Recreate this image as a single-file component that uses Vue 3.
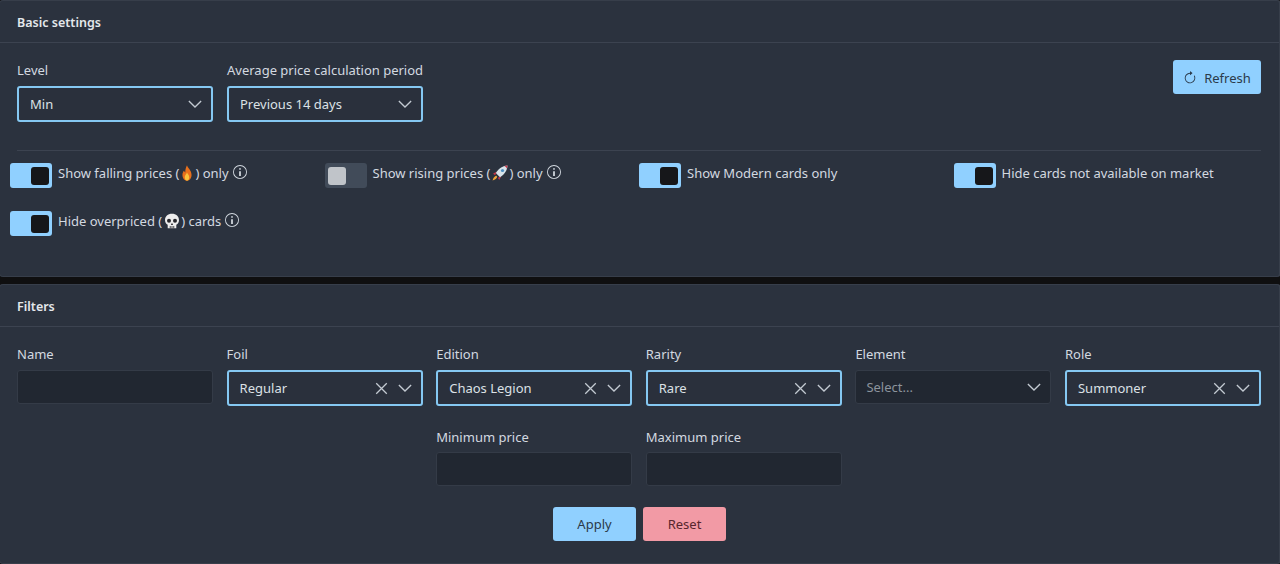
<script setup>
const topSwitches = [
  { label: 'Show falling prices (', emoji: 'fire', tail: ') only', info: true, on: true },
  { label: 'Show rising prices (', emoji: 'rocket', tail: ') only', info: true, on: false },
  { label: 'Show Modern cards only', on: true },
  { label: 'Hide cards not available on market', on: true },
  { label: 'Hide overpriced (', emoji: 'skull', tail: ') cards', info: true, on: true }
]
const filters = [
  { label: 'Name', type: 'input' },
  { label: 'Foil', value: 'Regular' },
  { label: 'Edition', value: 'Chaos Legion' },
  { label: 'Rarity', value: 'Rare' },
  { label: 'Element', placeholder: 'Select...' },
  { label: 'Role', value: 'Summoner' }
]
</script>

<template>
  <div class="page">
    <section class="card first">
      <header class="head">Basic settings</header>
      <div class="body">
        <div class="top-row">
          <div class="field">
            <label>Level</label>
            <div class="select active"><span class="val">Min</span>
              <svg class="chev" viewBox="0 0 16 16"><path d="M1 4.500l7 7 7-7" /></svg>
            </div>
          </div>
          <div class="field">
            <label>Average price calculation period</label>
            <div class="select active"><span class="val">Previous 14 days</span>
              <svg class="chev" viewBox="0 0 16 16"><path d="M1 4.500l7 7 7-7" /></svg>
            </div>
          </div>
          <button class="btn refresh">
            <svg class="refresh-icon" viewBox="0 0 16 16" fill="currentColor">
              <path fill-rule="evenodd" d="M8 3a5 5 0 1 0 4.546 2.914.5.5 0 0 1 .908-.417A6 6 0 1 1 8 2v1z" />
              <path d="M8 4.466V.534a.25.25 0 0 1 .41-.192l2.360 1.966c.12.1.12.284 0 .384L8.410 4.658A.25.25 0 0 1 8 4.466z" />
            </svg>
            Refresh
          </button>
        </div>
        <hr class="rule" />
        <div class="switches">
          <div v-for="s in topSwitches" :key="s.label" class="switch-item">
            <span class="switch" :class="{ on: s.on }"><i></i></span>
            <span class="switch-text">{{ s.label }}<template v-if="s.emoji">
                <svg v-if="s.emoji === 'fire'" class="emoji fire" viewBox="0 0 16 16" preserveAspectRatio="none">
                  <path fill="#e8701c" d="M8 .3c.6 2.600 5.200 4.900 5.200 9.600 0 3.400-2.400 5.800-5.200 5.800s-5.200-2.400-5.200-5.800c0-2 .9-3.500 1.900-4.500.2 1.100.6 1.800 1.300 2.200C6 5 6.600 2.400 8 .3z" />
                  <path fill="#f9c33c" d="M8 7.500c.4 1.500 2.600 2.500 2.600 4.800 0 1.800-1.200 3.400-2.600 3.400s-2.600-1.600-2.600-3.400C5.400 10.300 7.300 9.200 8 7.500z" />
                </svg>
                <svg v-else-if="s.emoji === 'rocket'" class="emoji" viewBox="0 0 16 16">
                  <path fill="#c8384a" d="M4.500 6.800 1 8.800l2.200 1.400zM9.200 11.500 7.200 15l-1.400-2.200z" />
                  <path fill="#d7e3ea" d="M15.500.5C11 .7 7 3 3.800 8l4.200 4.200c5-3.200 7.300-7.200 7.500-11.700z" />
                  <circle cx="10.500" cy="5.500" r="1.600" fill="#4d8fc2" />
                  <path fill="#c8384a" d="M12.200 1.100c1.100.5 2.200 1.500 2.700 2.700l.6-3.300z" />
                  <path fill="#f2a53a" d="M4.300 10.800c-1.600.4-3 2-3.700 4.600 2.600-.7 4.200-2.100 4.600-3.700z" />
                </svg>
                <svg v-else class="emoji" viewBox="0 0 16 16">
                  <path fill="#ededed" d="M8 .7C3.800.7 1 3.300 1 7c0 2.300 1.100 3.900 2.700 4.800v3.500h8.600v-3.500C13.900 10.900 15 9.300 15 7c0-3.700-2.800-6.300-7-6.300z" />
                  <circle cx="5" cy="7.700" r="2" fill="#26262a" />
                  <circle cx="11" cy="7.700" r="2" fill="#26262a" />
                  <path fill="#26262a" d="M8 9.800l1.100 2.100H6.900zM5.800 13h.8v2.300h-.8zM7.600 13h.8v2.300h-.8zM9.400 13h.8v2.300h-.8z" />
                </svg>{{ s.tail }}</template>
              <svg v-if="s.info" class="info" viewBox="0 0 16 16" fill="currentColor">
                <path d="M8 15A7 7 0 1 1 8 1a7 7 0 0 1 0 14zm0 1A8 8 0 1 0 8 0a8 8 0 0 0 0 16z" />
                <path d="M7 7h2v5.500H7zM9 4.500a1 1 0 1 1-2 0 1 1 0 0 1 2 0z" />
              </svg>
            </span>
          </div>
        </div>
      </div>
    </section>

    <section class="card second">
      <header class="head">Filters</header>
      <div class="body filters">
        <div v-for="f in filters" :key="f.label" class="field">
          <label>{{ f.label }}</label>
          <div v-if="f.type === 'input'" class="input"></div>
          <div v-else-if="f.placeholder" class="select idle">
            <span class="val placeholder">{{ f.placeholder }}</span>
            <svg class="chev" viewBox="0 0 16 16"><path d="M1 4.500l7 7 7-7" /></svg>
          </div>
          <div v-else class="select active">
            <span class="val">{{ f.value }}</span>
            <svg class="clear" viewBox="0 0 16 16"><path d="M1.500 1.500l13 13M14.500 1.500l-13 13" /></svg>
            <svg class="chev" viewBox="0 0 16 16"><path d="M1 4.500l7 7 7-7" /></svg>
          </div>
        </div>
        <div class="field min"><label>Minimum price</label><div class="input"></div></div>
        <div class="field max"><label>Maximum price</label><div class="input"></div></div>
      </div>
      <div class="actions">
        <button class="btn">Apply</button>
        <button class="btn danger">Reset</button>
      </div>
    </section>
  </div>
</template>

<style>
html, body { margin: 0; background: #0f0f10; }
</style>

<style scoped>
.page {
  width: 1280px;
  height: 564px;
  overflow: hidden;
  display: flex;
  flex-direction: column;
  gap: 7px;
  background: #0f0f10;
  font-family: "Noto Sans", "Open Sans", sans-serif;
  font-size: 13px;
  color: #d3d9e0;
}
.card {
  background: #2b323e;
  border: 1px solid #373e4a;
  border-right-width: 2px;
  border-radius: 4px;
  box-sizing: border-box;
  margin: 0 -1px;
}
.first { height: 277px; flex: none; }
.second { flex: 1; }
.head {
  height: 42px;
  box-sizing: border-box;
  padding: 2px 17px 0;
  display: flex;
  align-items: center;
  border-bottom: 1px solid #3c4350;
  font-weight: 600;
  font-size: 12.500px;
  color: #e4e8ec;
}
.body { padding: 17px 18px 0 17px; }
.top-row { display: flex; gap: 14px; align-items: flex-start; }
.top-row .field { width: 196px; }
.field label {
  display: block;
  height: 18px;
  line-height: 18px;
  margin: 1px 0 7px;
  white-space: nowrap;
}
.select, .input {
  height: 34px;
  box-sizing: border-box;
  border-radius: 3px;
  display: flex;
  align-items: center;
}
.select { padding: 0 9px 0 10px; gap: 10px; }
.select.active { height: 36px; border: 2px solid #85c8f2; background: #2a303c; }
.select.idle, .input { border: 1px solid #343b47; background: #212731; }
.val { flex: 1; margin-left: 1px; color: #dce1e6; white-space: nowrap; }
.placeholder { color: #8c939d; margin-left: 0; }
.chev, .clear { width: 14px; height: 14px; flex: none; fill: none; stroke: #c3cad2; stroke-width: 1.500; }
.clear { width: 13px; height: 13px; stroke-width: 1.600; }
.btn {
  height: 34px;
  width: 83px;
  border: none;
  border-radius: 3px;
  background: #90d0ff;
  color: #2b3a4a;
  font: inherit;
  display: inline-flex;
  align-items: center;
  justify-content: center;
  padding: 0;
}
.refresh { margin-left: auto; width: 88px; gap: 7px; padding-top: 1px; }
.refresh-icon { width: 14px; height: 14px; }
.danger { background: #f29aa5; color: #57262e; }
.rule { border: none; border-top: 1px solid #3c4350; margin: 28px 0 12px; }
.switches {
  margin-left: -7px;
  display: grid;
  grid-template-columns: repeat(4, 314.500px);
  row-gap: 23px;
}
.switch-item { display: flex; align-items: center; gap: 6px; height: 25px; white-space: nowrap; }
.switch {
  width: 42px;
  height: 25px;
  box-sizing: border-box;
  border-radius: 3px;
  background: #414b59;
  display: flex;
  align-items: center;
  padding: 0 3px;
  flex: none;
}
.switch i { width: 18px; height: 18px; border-radius: 3px; background: #c0c4c9; display: block; }
.switch.on { background: #90d0ff; justify-content: flex-end; }
.switch.on i { background: #16171a; }
.switch-text { display: inline-flex; align-items: center; margin-top: -6px; }
.emoji { width: 16px; height: 16px; margin: 0 1.500px; flex: none; }
.emoji.fire { width: 14px; margin: 0 1px; }
.info { width: 14px; height: 14px; margin-left: 4px; margin-top: -2px; flex: none; }
.filters {
  display: grid;
  grid-template-columns: repeat(6, 1fr);
  column-gap: 13.600px;
  row-gap: 21px;
}
.min { grid-column: 3; }
.max { grid-column: 4; }
.min label, .max label { margin-bottom: 6px; }
.actions { display: flex; justify-content: center; gap: 7px; margin-top: 21px; }
</style>
